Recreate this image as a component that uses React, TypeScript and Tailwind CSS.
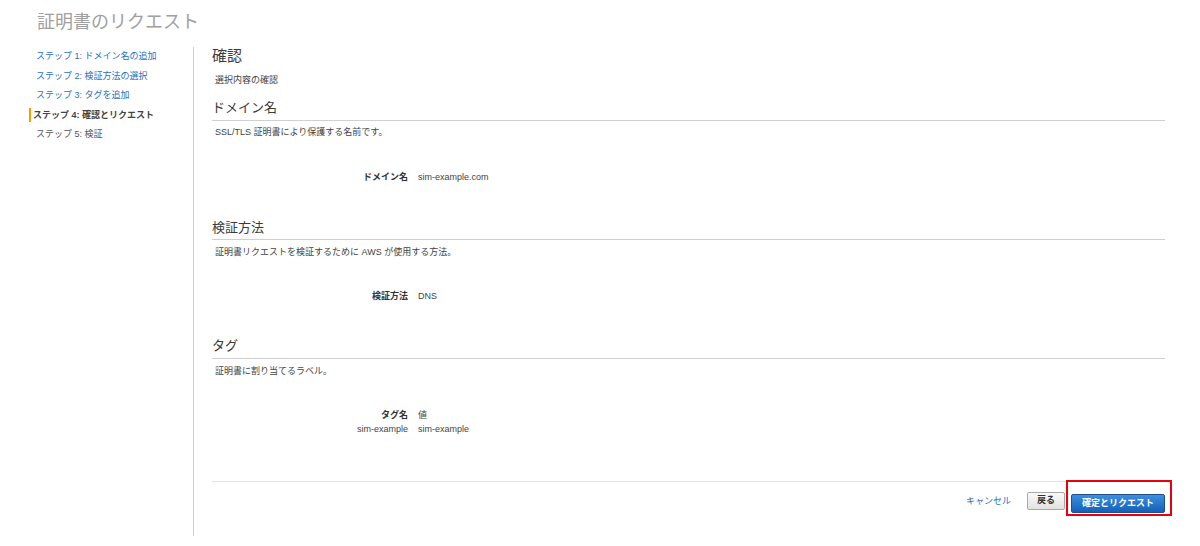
const steps = [
  { label: "ステップ 1: ドメイン名の追加", state: "done" },
  { label: "ステップ 2: 検証方法の選択", state: "done" },
  { label: "ステップ 3: タグを追加", state: "done" },
  { label: "ステップ 4: 確認とリクエスト", state: "active" },
  { label: "ステップ 5: 検証", state: "todo" },
];

function Sidebar() {
  return (
    <nav className="w-[194px] shrink-0 border-r border-[#cfcfcf] pl-[29px] h-[489px]">
      {steps.map((s) =>
        s.state === "active" ? (
          <div key={s.label} className="h-[19.5px] flex items-center">
            <span className="border-l-2 border-[#f90] pl-[2px] leading-[14px] font-bold text-[#444] text-[9px]">
              {s.label}
            </span>
          </div>
        ) : (
          <div
            key={s.label}
            className={
              "h-[19.5px] flex items-center pl-[7px] text-[9px] " +
              (s.state === "done" ? "text-[#1f6fc5]" : "text-[#555]")
            }
          >
            {s.label}
          </div>
        )
      )}
    </nav>
  );
}

function SectionHeading({ title, pb }: { title: string; pb: string }) {
  return (
    <div className={"border-b border-[#d0d0d0] text-[13px] leading-[18px] text-[#3a3a3a] " + pb}>
      {title}
    </div>
  );
}

function KV({ k, v }: { k: string; v: string }) {
  return (
    <div className="flex leading-[14px] text-[9px]">
      <div className="w-[196px] text-right text-[#333] font-bold">{k}</div>
      <div className="pl-[10px] text-[#444]">{v}</div>
    </div>
  );
}

export default function App() {
  return (
    <div className="w-[1200px] h-[546px] bg-white font-['Liberation_Sans','Noto_Sans_CJK_JP',sans-serif] overflow-hidden">
      <h1 className="pl-[37px] pt-[10px] h-[47px] text-[18px] leading-[24px] text-[#a0a0a0] font-normal">
        証明書のリクエスト
      </h1>
      <div className="flex">
        <Sidebar />
        <main className="flex-1 pl-[18px] pr-[35px]">
          <div className="text-[15px] leading-[18px] text-[#3a3a3a]">確認</div>
          <div className="mt-[9px] pl-[3px] text-[9px] leading-[12px] text-[#444]">選択内容の確認</div>

          <div className="mt-[13px]">
            <SectionHeading title="ドメイン名" pb="pb-[3px]" />
          </div>
          <div className="mt-[5px] pl-[3px] text-[9px] leading-[12px] text-[#444]">
            SSL/TLS 証明書により保護する名前です。
          </div>
          <div className="mt-[32px]">
            <KV k="ドメイン名" v="sim-example.com" />
          </div>

          <div className="mt-[35px]">
            <SectionHeading title="検証方法" pb="pb-[2px]" />
          </div>
          <div className="mt-[6px] pl-[3px] text-[9px] leading-[12px] text-[#444]">
            証明書リクエストを検証するために AWS が使用する方法。
          </div>
          <div className="mt-[31px]">
            <KV k="検証方法" v="DNS" />
          </div>

          <div className="mt-[34px]">
            <SectionHeading title="タグ" pb="pb-[3px]" />
          </div>
          <div className="mt-[6px] pl-[3px] text-[9px] leading-[12px] text-[#444]">
            証明書に割り当てるラベル。
          </div>
          <div className="mt-[31px]">
            <KV k="タグ名" v="値" />
            <div className="flex leading-[14px] text-[9px] text-[#444]">
              <div className="w-[196px] text-right">sim-example</div>
              <div className="pl-[10px]">sim-example</div>
            </div>
          </div>

          <div className="mt-[45px] border-t border-[#e2e2e2] pt-[7px] flex justify-end items-center">
            <a className="text-[9px] text-[#1f6fc5] mr-[16px] leading-[18px] cursor-pointer">キャンセル</a>
            <button className="h-[18px] w-[38px] rounded-[2px] border border-[#a9a9a9] bg-gradient-to-b from-[#fafafa] to-[#e2e2e2] text-[9px] font-bold text-[#333] mr-[6px]">
              戻る
            </button>
            <div className="relative">
              <button className="h-[19px] w-[94px] rounded-[2px] border border-[#1c4f8f] bg-gradient-to-b from-[#3b8fe0] to-[#1560b8] text-[9px] font-bold text-white">
                確定とリクエスト
              </button>
              <div className="absolute -left-[5px] -top-[9px] w-[106px] h-[36px] border-2 border-[#e8000b] pointer-events-none" />
            </div>
          </div>
        </main>
      </div>
    </div>
  );
}
